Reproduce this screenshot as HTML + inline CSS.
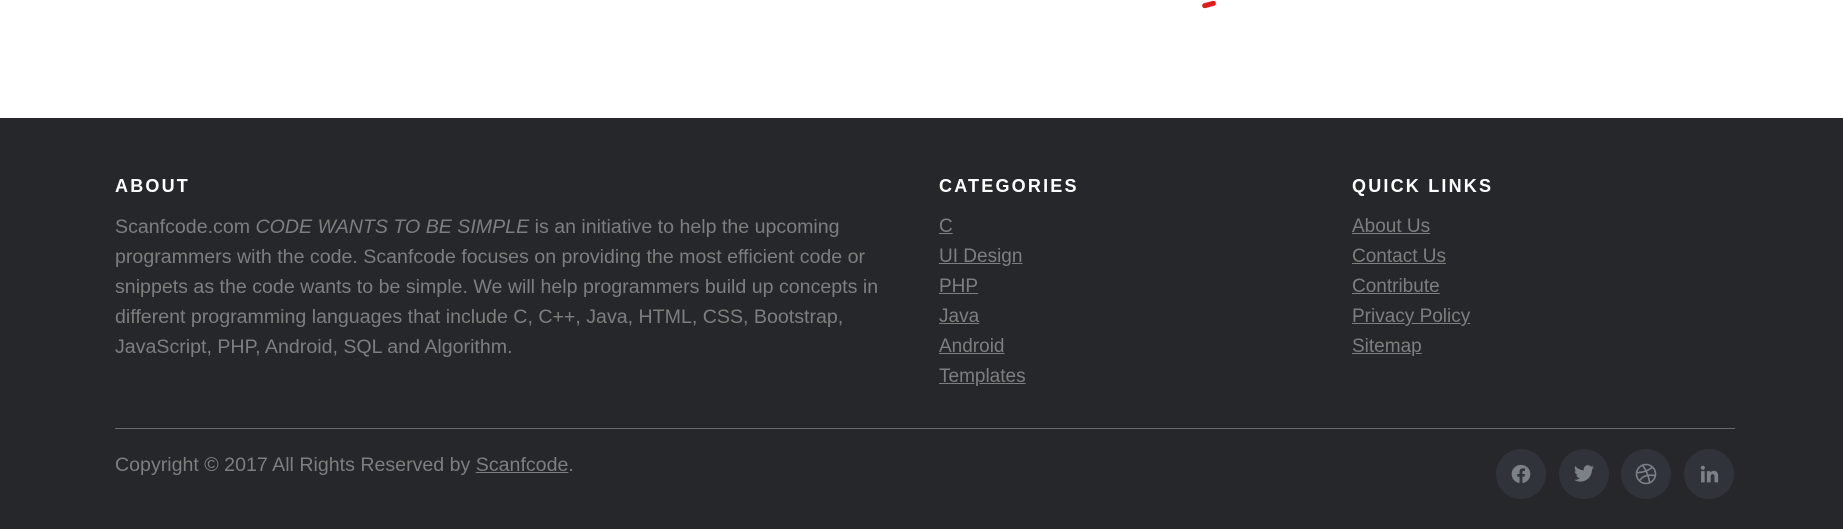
<!DOCTYPE html>
<html><head><meta charset="utf-8"><style>
*{margin:0;padding:0;box-sizing:border-box}
body{width:1843px;height:529px;background:#fff;font-family:"Liberation Sans",sans-serif;position:relative;overflow:hidden}
.red{position:absolute;left:1202px;top:2px;width:14px;height:5px;background:#e31b1b;border-radius:3px;transform:rotate(-15deg)}
footer{position:absolute;left:0;top:118px;width:1843px;height:411px;background:#26272b;color:#7e7e7e}
h6{position:absolute;color:#fff;font-size:18px;font-weight:bold;letter-spacing:2.2px;top:58px}
.about{position:absolute;left:115px;top:94px;font-size:19.6px;line-height:30px;white-space:nowrap}
ul{list-style:none;position:absolute;top:94px;font-size:19px;line-height:30px}
a{color:#7e7e7e;text-decoration:underline}
hr{position:absolute;left:115px;top:310px;width:1620px;border:0;border-top:1px solid #6a6a6d}
.copy{position:absolute;left:115px;top:332px;font-size:19.6px;line-height:30px}
.soc{position:absolute;top:331px;width:50px;height:50px;border-radius:50%;background:#31333b;display:flex;align-items:center;justify-content:center}
</style></head><body>
<div class="red"></div>
<footer>
<h6 style="left:115px">ABOUT</h6>
<p class="about">Scanfcode.com <i>CODE WANTS TO BE SIMPLE</i> is an initiative to help the upcoming<br>programmers with the code. Scanfcode focuses on providing the most efficient code or<br>snippets as the code wants to be simple. We will help programmers build up concepts in<br>different programming languages that include C, C++, Java, HTML, CSS, Bootstrap,<br>JavaScript, PHP, Android, SQL and Algorithm.</p>
<h6 style="left:939px">CATEGORIES</h6>
<ul style="left:939px"><li><a>C</a></li><li><a>UI Design</a></li><li><a>PHP</a></li><li><a>Java</a></li><li><a>Android</a></li><li><a>Templates</a></li></ul>
<h6 style="left:1352px">QUICK LINKS</h6>
<ul style="left:1352px"><li><a>About Us</a></li><li><a>Contact Us</a></li><li><a>Contribute</a></li><li><a>Privacy Policy</a></li><li><a>Sitemap</a></li></ul>
<hr>
<p class="copy">Copyright © 2017 All Rights Reserved by <a>Scanfcode</a>.</p>
<div class="soc" style="left:1496px"><svg width="22" height="22" viewBox="0 0 24 24"><path fill="#7c8188" d="M12 2a10 10 0 0 0-1.6 19.9v-7H7.9V12h2.5V9.8c0-2.5 1.5-3.9 3.8-3.9 1.1 0 2.2.2 2.2.2v2.5h-1.3c-1.2 0-1.6.8-1.6 1.6V12h2.8l-.4 2.9h-2.300v7A10 10 0 0 0 12 2z"/></svg></div>
<div class="soc" style="left:1559px"><svg width="22" height="22" viewBox="0 0 24 24"><path fill="#7c8188" d="M23 4.6a9 9 0 0 1-2.6.7 4.5 4.5 0 0 0 2-2.5 9 9 0 0 1-2.9 1.1 4.5 4.5 0 0 0-7.7 4.1A12.8 12.8 0 0 1 2.5 3.300a4.5 4.5 0 0 0 1.4 6 4.5 4.5 0 0 1-2-.6v.1a4.5 4.5 0 0 0 3.6 4.4 4.5 4.5 0 0 1-2 .1 4.5 4.5 0 0 0 4.2 3.1A9 9 0 0 1 1 18.3 12.8 12.8 0 0 0 7.9 20.3c8.3 0 12.8-6.9 12.8-12.8v-.6A9 9 0 0 0 23 4.6z"/></svg></div>
<div class="soc" style="left:1621px"><svg width="24" height="24" viewBox="0 0 24 24" fill="none" stroke="#7c8188" stroke-width="1.6"><circle cx="12" cy="12" r="9.5"/><path d="M8.5 3.2c3.5 4.5 6 10 7.2 17.3M2.6 10.5c5 .3 10.5-1 15.4-5M5.3 18.7c3.5-5 9-6.5 16.2-5"/></svg></div>
<div class="soc" style="left:1684px"><svg width="20" height="20" viewBox="0 0 24 24"><path fill="#7c8188" d="M2.5 8.5h4.3V22H2.5zM4.6 2a2.5 2.5 0 1 1 0 5 2.5 2.5 0 0 1 0-5zM9.5 8.5h4.1v1.9c.6-1.1 2-2.2 4.1-2.2 4.4 0 5.2 2.9 5.2 6.6V22h-4.3v-6.4c0-1.5 0-3.5-2.1-3.5s-2.5 1.7-2.5 3.4V22H9.5z"/></svg></div>
</footer>
</body></html>
